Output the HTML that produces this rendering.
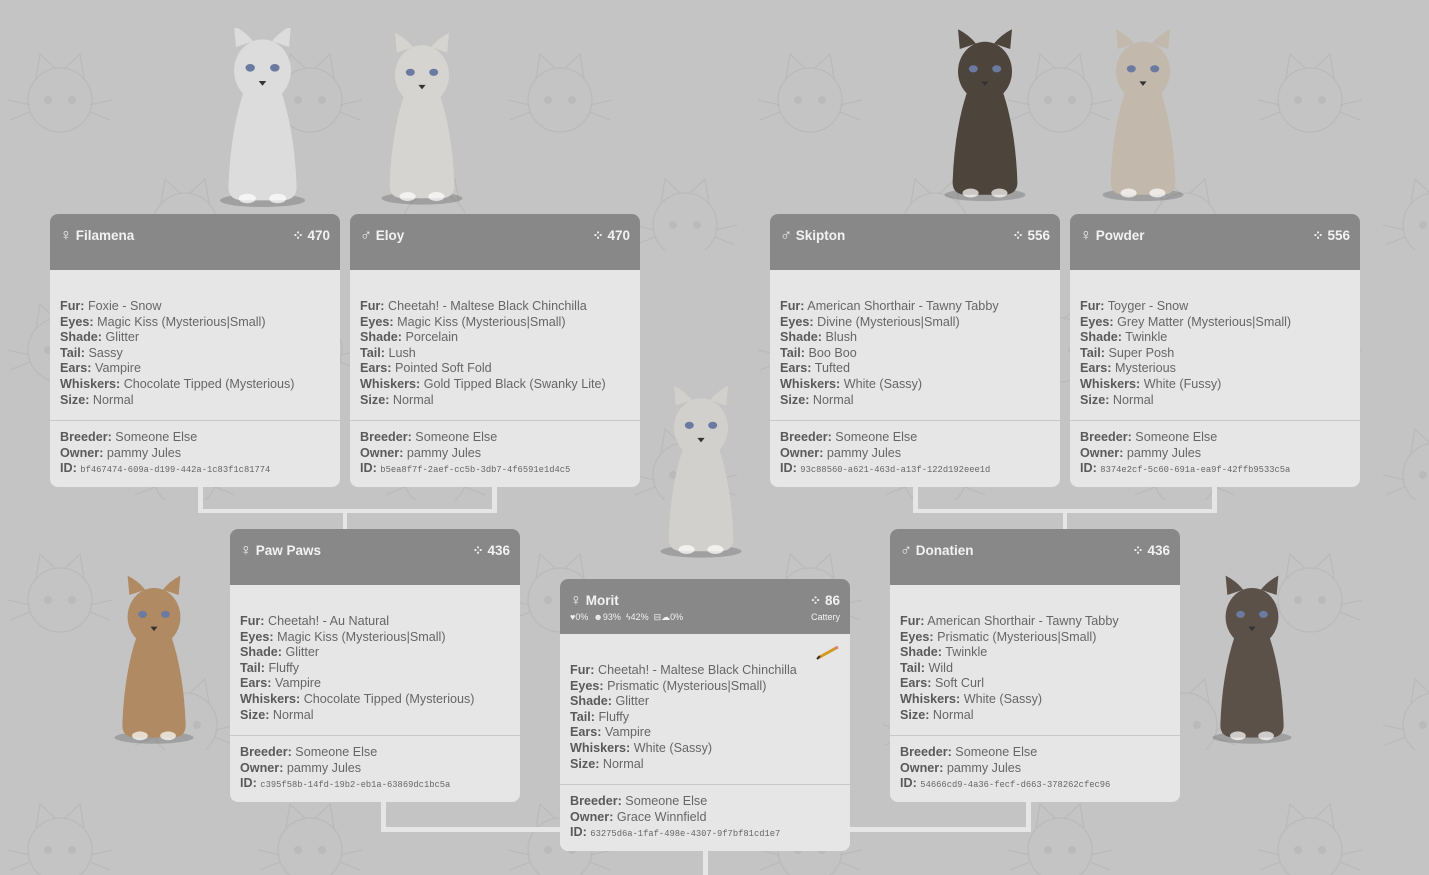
<!DOCTYPE html>
<html><head><meta charset="utf-8">
<style>
*{margin:0;padding:0;box-sizing:border-box}
body{width:1429px;height:875px;overflow:hidden;background:#c4c4c4;font-family:"Liberation Sans",Tahoma,sans-serif;position:relative}
#bg{position:absolute;left:0;top:0}
.card{position:absolute;width:290px;background:#e6e6e6;border-radius:8px;overflow:hidden;color:#666;font-size:12.6px}
.hd{background:#888;height:56px;color:#f2f2f2;font-weight:bold;font-size:13.5px;padding:14px 10px 0 10px;position:relative}
.hd .g{font-size:16px;line-height:13px}
.hd .n{position:absolute;right:10px;top:14px}
.hd .sub{font-size:9px;font-weight:normal;margin-top:4px;display:flex;justify-content:space-between}
.bd{padding:29px 10px 12px 10px;line-height:15.6px;border-bottom:1.5px solid #c8c8c8}
.ft{padding:9px 10px 8px 10px;line-height:15.6px}
b{color:#5a5a5a}
.id{font-family:"Liberation Mono",monospace;font-size:8.8px}
.ln{position:absolute;background:#e6e6e6}
</style></head><body>
<svg id="bg" width="1429" height="875">
<defs>
<pattern id="p" width="250" height="250" patternUnits="userSpaceOnUse">
<g fill="none" stroke="#bababa" stroke-width="1.3">
<g transform="translate(20,60)"><circle cx="40" cy="40" r="32"/><path d="M16 18 L20 -6 L36 9 M64 18 L60 -6 L44 9 M10 45 L-12 40 M10 52 L-10 60 M70 45 L92 40 M70 52 L90 60"/></g>
<g transform="translate(145,185)"><circle cx="40" cy="40" r="32"/><path d="M16 18 L20 -6 L36 9 M64 18 L60 -6 L44 9 M10 45 L-12 40 M10 52 L-10 60 M70 45 L92 40 M70 52 L90 60"/></g>
</g>
<g fill="#bababa"><circle cx="48" cy="100" r="4"/><circle cx="72" cy="100" r="4"/><circle cx="173" cy="225" r="4"/><circle cx="197" cy="225" r="4"/></g>
</pattern>
<symbol id="cat" viewBox="0 0 100 190">
<ellipse cx="50" cy="182" rx="45" ry="7" fill="#000" opacity=".18"/>
<path d="M30 68 Q16 110 14 168 Q14 182 30 182 L70 182 Q86 182 86 168 Q84 110 70 68 Z"/>
<path d="M22 20 L20 -2 Q32 4 40 14 Z M78 20 L80 -2 Q68 4 60 14 Z"/>
<ellipse cx="50" cy="45" rx="30" ry="33"/>
<ellipse cx="37" cy="42" rx="5" ry="4" fill="#6a7aa0"/><ellipse cx="63" cy="42" rx="5" ry="4" fill="#6a7aa0"/>
<path d="M46 56 L54 56 L50 61Z" fill="#333"/>
<ellipse cx="34" cy="180" rx="9" ry="5" fill="#fff" opacity=".7"/><ellipse cx="66" cy="180" rx="9" ry="5" fill="#fff" opacity=".7"/>
</symbol>
</defs>
<rect width="1429" height="875" fill="url(#p)"/>
<use href="#cat" x="215" y="28" width="95" height="180" fill="#dcdcdc"/>
<use href="#cat" x="377" y="32" width="90" height="176" fill="#d6d4d0"/>
<use href="#cat" x="940" y="25" width="90" height="183" fill="#4d443c"/>
<use href="#cat" x="1098" y="25" width="90" height="183" fill="#c2b8ac"/>
<use href="#cat" x="656" y="385" width="90" height="176" fill="#d2d0cc"/>
<use href="#cat" x="110" y="572" width="88" height="178" fill="#b08a62"/>
<use href="#cat" x="1208" y="572" width="88" height="178" fill="#5c5149"/>
</svg>

<div class="ln" style="left:198px;top:485px;width:5px;height:28px"></div>
<div class="ln" style="left:492px;top:485px;width:5px;height:28px"></div>
<div class="ln" style="left:198px;top:509px;width:299px;height:4px"></div>
<div class="ln" style="left:343px;top:509px;width:4px;height:22px"></div>
<div class="ln" style="left:913px;top:485px;width:5px;height:28px"></div>
<div class="ln" style="left:1212px;top:485px;width:5px;height:28px"></div>
<div class="ln" style="left:913px;top:509px;width:304px;height:4px"></div>
<div class="ln" style="left:1063px;top:509px;width:4px;height:22px"></div>
<div class="ln" style="left:381px;top:800px;width:5px;height:32px"></div>
<div class="ln" style="left:381px;top:827px;width:181px;height:5px"></div>
<div class="ln" style="left:1026px;top:800px;width:5px;height:32px"></div>
<div class="ln" style="left:848px;top:827px;width:183px;height:5px"></div>
<div class="ln" style="left:703px;top:850px;width:5px;height:25px"></div>

<div class="card" style="left:50px;top:214px">
<div class="hd"><span class="g">♀</span> Filamena<span class="n">⁘ 470</span></div>
<div class="bd"><b>Fur:</b> Foxie - Snow<br><b>Eyes:</b> Magic Kiss (Mysterious|Small)<br><b>Shade:</b> Glitter<br><b>Tail:</b> Sassy<br><b>Ears:</b> Vampire<br><b>Whiskers:</b> Chocolate Tipped (Mysterious)<br><b>Size:</b> Normal</div>
<div class="ft"><b>Breeder:</b> Someone Else<br><b>Owner:</b> pammy Jules<br><b>ID:</b> <span class="id">bf467474-609a-d199-442a-1c83f1c81774</span></div>
</div>

<div class="card" style="left:350px;top:214px">
<div class="hd"><span class="g">♂</span> Eloy<span class="n">⁘ 470</span></div>
<div class="bd"><b>Fur:</b> Cheetah! - Maltese Black Chinchilla<br><b>Eyes:</b> Magic Kiss (Mysterious|Small)<br><b>Shade:</b> Porcelain<br><b>Tail:</b> Lush<br><b>Ears:</b> Pointed Soft Fold<br><b>Whiskers:</b> Gold Tipped Black (Swanky Lite)<br><b>Size:</b> Normal</div>
<div class="ft"><b>Breeder:</b> Someone Else<br><b>Owner:</b> pammy Jules<br><b>ID:</b> <span class="id">b5ea8f7f-2aef-cc5b-3db7-4f6591e1d4c5</span></div>
</div>

<div class="card" style="left:770px;top:214px">
<div class="hd"><span class="g">♂</span> Skipton<span class="n">⁘ 556</span></div>
<div class="bd"><b>Fur:</b> American Shorthair - Tawny Tabby<br><b>Eyes:</b> Divine (Mysterious|Small)<br><b>Shade:</b> Blush<br><b>Tail:</b> Boo Boo<br><b>Ears:</b> Tufted<br><b>Whiskers:</b> White (Sassy)<br><b>Size:</b> Normal</div>
<div class="ft"><b>Breeder:</b> Someone Else<br><b>Owner:</b> pammy Jules<br><b>ID:</b> <span class="id">93c88560-a621-463d-a13f-122d192eee1d</span></div>
</div>

<div class="card" style="left:1070px;top:214px">
<div class="hd"><span class="g">♀</span> Powder<span class="n">⁘ 556</span></div>
<div class="bd"><b>Fur:</b> Toyger - Snow<br><b>Eyes:</b> Grey Matter (Mysterious|Small)<br><b>Shade:</b> Twinkle<br><b>Tail:</b> Super Posh<br><b>Ears:</b> Mysterious<br><b>Whiskers:</b> White (Fussy)<br><b>Size:</b> Normal</div>
<div class="ft"><b>Breeder:</b> Someone Else<br><b>Owner:</b> pammy Jules<br><b>ID:</b> <span class="id">8374e2cf-5c60-691a-ea9f-42ffb9533c5a</span></div>
</div>

<div class="card" style="left:230px;top:529px">
<div class="hd"><span class="g">♀</span> Paw Paws<span class="n">⁘ 436</span></div>
<div class="bd"><b>Fur:</b> Cheetah! - Au Natural<br><b>Eyes:</b> Magic Kiss (Mysterious|Small)<br><b>Shade:</b> Glitter<br><b>Tail:</b> Fluffy<br><b>Ears:</b> Vampire<br><b>Whiskers:</b> Chocolate Tipped (Mysterious)<br><b>Size:</b> Normal</div>
<div class="ft"><b>Breeder:</b> Someone Else<br><b>Owner:</b> pammy Jules<br><b>ID:</b> <span class="id">c395f58b-14fd-19b2-eb1a-63869dc1bc5a</span></div>
</div>

<div class="card" style="left:890px;top:529px">
<div class="hd"><span class="g">♂</span> Donatien<span class="n">⁘ 436</span></div>
<div class="bd"><b>Fur:</b> American Shorthair - Tawny Tabby<br><b>Eyes:</b> Prismatic (Mysterious|Small)<br><b>Shade:</b> Twinkle<br><b>Tail:</b> Wild<br><b>Ears:</b> Soft Curl<br><b>Whiskers:</b> White (Sassy)<br><b>Size:</b> Normal</div>
<div class="ft"><b>Breeder:</b> Someone Else<br><b>Owner:</b> pammy Jules<br><b>ID:</b> <span class="id">54666cd9-4a36-fecf-d663-378262cfec96</span></div>
</div>

<div class="card" style="left:560px;top:579px">
<div class="hd" style="height:55px;padding-top:14px"><span class="g">♀</span> Morit<span class="n">⁘ 86</span>
<div class="sub"><span>♥0% &nbsp;☻93% &nbsp;ϟ42% &nbsp;⊟☁0%</span><span>Cattery</span></div></div>
<div class="bd" style="position:relative"><svg style="position:absolute;right:10px;top:12px" width="24" height="14"><path d="M2 12 L20 2" stroke="#d49a20" stroke-width="3"/><path d="M1 13 L4 10" stroke="#333" stroke-width="2"/><path d="M19 2.5 L22 1" stroke="#e08080" stroke-width="3"/></svg><b>Fur:</b> Cheetah! - Maltese Black Chinchilla<br><b>Eyes:</b> Prismatic (Mysterious|Small)<br><b>Shade:</b> Glitter<br><b>Tail:</b> Fluffy<br><b>Ears:</b> Vampire<br><b>Whiskers:</b> White (Sassy)<br><b>Size:</b> Normal</div>
<div class="ft"><b>Breeder:</b> Someone Else<br><b>Owner:</b> Grace Winnfield<br><b>ID:</b> <span class="id">63275d6a-1faf-498e-4307-9f7bf81cd1e7</span></div>
</div>
</body></html>
